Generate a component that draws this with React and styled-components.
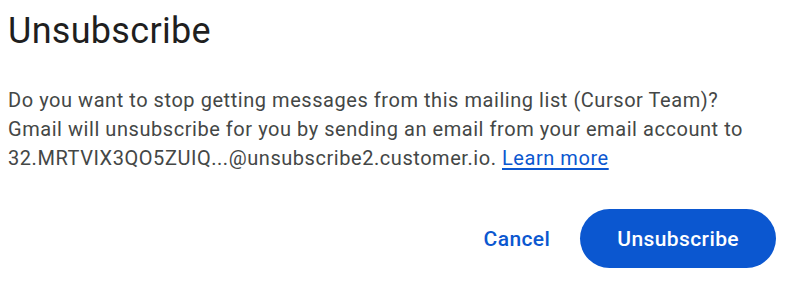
import styled, { createGlobalStyle } from 'styled-components'

const GlobalStyle = createGlobalStyle`
  html, body {
    margin: 0;
    padding: 0;
    background: #ffffff;
  }
  body {
    font-family: Roboto, "Noto Sans", "Liberation Sans", sans-serif;
    -webkit-font-smoothing: antialiased;
  }
`

const Dialog = styled.div`
  width: 790px;
  height: 286px;
  box-sizing: border-box;
  padding: 9px 14px 0 8px;
  display: flex;
  flex-direction: column;
`

const Title = styled.h1`
  margin: 0;
  font-size: 36px;
  font-weight: 400;
  line-height: 44px;
  color: #1f1f1f;
  letter-spacing: 0.3px;
`

const Body = styled.p`
  margin: 33px 0 0;
  font-size: 20px;
  line-height: 29px;
  color: #444746;
  letter-spacing: 0.55px;
`

const Link = styled.a`
  color: #0b57d0;
  text-decoration: underline;
  text-underline-offset: 3px;
  cursor: pointer;
`

const Actions = styled.div`
  margin-top: 36px;
  display: flex;
  justify-content: flex-end;
  align-items: center;
  gap: 30px;
`

const Button = styled.button`
  font-family: inherit;
  font-size: 21px;
  font-weight: 500;
  letter-spacing: 0.4px;
  border: none;
  cursor: pointer;
  height: 59px;
  border-radius: 30px;
  padding: 0 ${p => (p.$filled ? '37px' : '0')};
  background: ${p => (p.$filled ? '#0b57d0' : 'transparent')};
  color: ${p => (p.$filled ? '#ffffff' : '#0b57d0')};
`

export default function App() {
  return (
    <>
      <GlobalStyle />
      <Dialog>
        <Title>Unsubscribe</Title>
        <Body>
          Do you want to stop getting messages from this mailing list (Cursor Team)?
          <br />
          Gmail will unsubscribe for you by sending an email from your email account to
          <br />
          32.MRTVIX3QO5ZUIQ...@unsubscribe2.customer.io. <Link>Learn more</Link>
        </Body>
        <Actions>
          <Button>Cancel</Button>
          <Button $filled>Unsubscribe</Button>
        </Actions>
      </Dialog>
    </>
  )
}
